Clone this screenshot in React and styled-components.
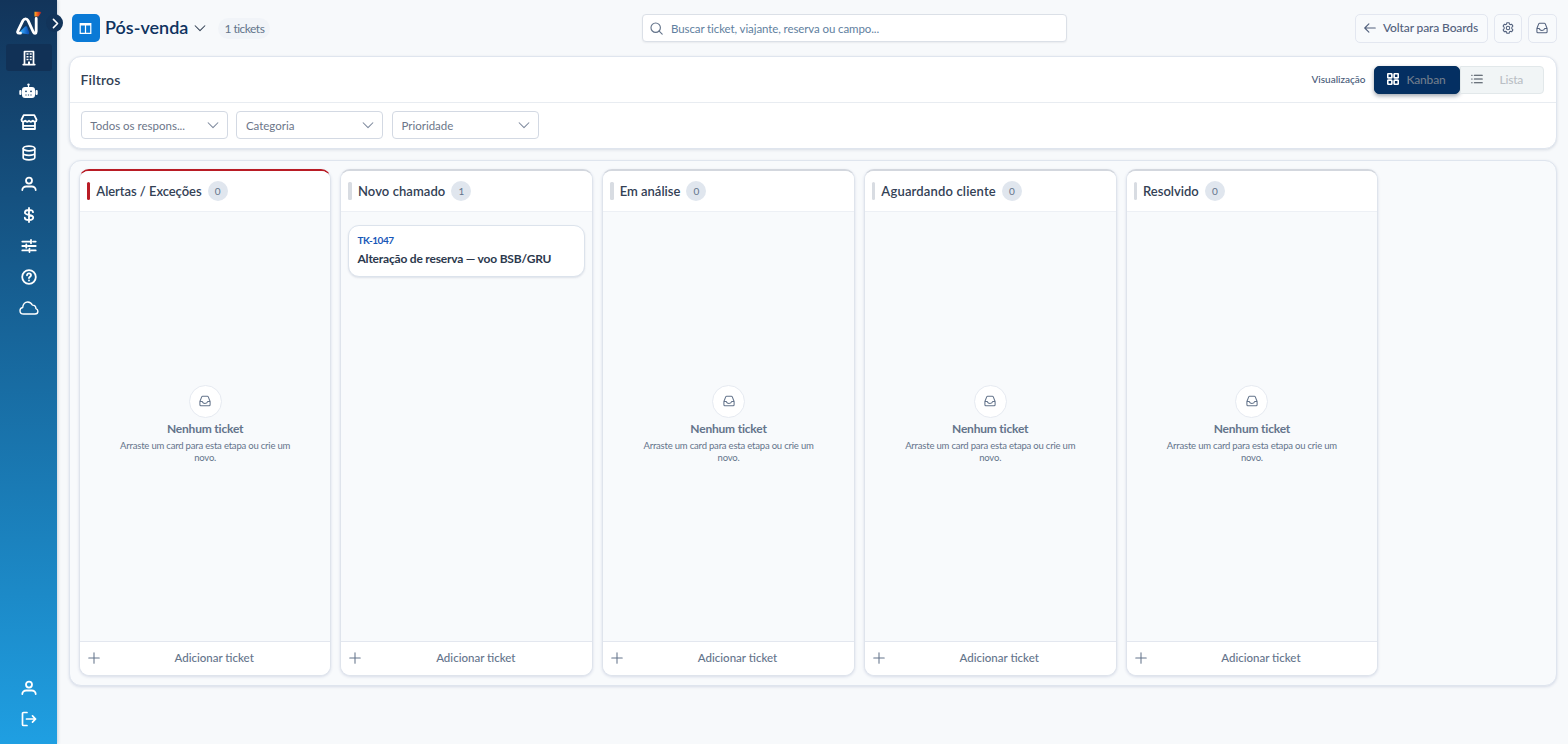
import React, { useState } from 'react';
import styled, { createGlobalStyle } from 'styled-components';

const GlobalStyle = createGlobalStyle`
  * {
    box-sizing: border-box;
  }

  body {
    margin: 0;
    background: #f7f9fb;
    font-family: 'Lato', 'Noto Sans', sans-serif;
    color: #334155;
    overflow: hidden;
  }

  button, input {
    font-family: inherit;
    margin: 0;
    padding: 0;
  }
`;

const Page = styled.div`
  display: flex;
  height: 744px;
`;

/* ---------- sidebar ---------- */

const Sidebar = styled.aside`
  position: relative;
  flex: none;
  width: 57px;
  height: 100%;
  display: flex;
  flex-direction: column;
  align-items: center;
  padding: 10px 0 10px;
  background: linear-gradient(180deg, #12345a 0%, #17659a 45%, #1f9fe2 100%);
  box-shadow: 1px 0 3px rgba(15, 40, 80, 0.18);
`;

const Logo = styled.div`
  height: 34px;
  width: 100%;
  padding-left: 15px;

  svg {
    display: block;
  }
`;

const NavItem = styled.button`
  width: 46px;
  height: ${(props) => (props.$active ? '27px' : '31px')};
  margin-bottom: ${(props) => (props.$active ? '4px' : '0')};
  display: flex;
  align-items: center;
  justify-content: center;
  border: 0;
  border-radius: 3px;
  color: #fff;
  background: ${(props) => (props.$active ? '#113156' : 'transparent')};
`;

const NavBottom = styled.div`
  margin-top: auto;
  display: flex;
  flex-direction: column;
`;

const Toggle = styled.button`
  position: absolute;
  top: 14px;
  left: 46px;
  width: 17px;
  height: 18px;
  display: flex;
  align-items: center;
  justify-content: center;
  padding-left: 2px;
  border: 0;
  border-radius: 50%;
  background: #12345a;
  color: #fff;
`;

/* ---------- top bar ---------- */

const Main = styled.main`
  flex: 1;
  min-width: 0;
  padding: 0 11.5px 0 11.5px;
`;

const TopBar = styled.header`
  height: 56px;
  display: grid;
  grid-template-columns: 573.5px 425px 1fr;
  align-items: center;
`;

const TitleGroup = styled.div`
  display: flex;
  align-items: center;
  padding-left: 3.5px;
`;

const BoardIcon = styled.span`
  width: 28px;
  height: 28px;
  display: flex;
  align-items: center;
  justify-content: center;
  margin-right: 5px;
  padding-right: 1px;
  border-radius: 5px;
  background: #0a7ad6;
  color: #fff;
`;

const Title = styled.h1`
  margin: 0 6px 2px 0;
  font-size: 18px;
  font-weight: 600;
  line-height: 22px;
  letter-spacing: 0;
  color: #0f335f;
`;

const Pill = styled.span`
  height: 21px;
  margin-left: 12px;
  padding: 0 6px;
  border-radius: 11px;
  background: #f1f4f8;
  color: #64748b;
  font-size: 12px;
  line-height: 21px;
  letter-spacing: -0.5px;
`;

const SearchBox = styled.label`
  height: 28px;
  display: flex;
  align-items: center;
  gap: 8px;
  padding: 0 7px;
  border: 1px solid #dbe0e7;
  border-radius: 4px;
  background: #fff;
  box-shadow: 0 1px 2px rgba(15, 23, 42, 0.06);
  color: #64748b;

  input {
    flex: 1;
    border: 0;
    outline: 0;
    background: transparent;
    font-size: 11.5px;
    letter-spacing: -0.1px;

    &::placeholder {
      color: #5f7fa0;
      opacity: 1;
    }
  }
`;

const Actions = styled.div`
  display: flex;
  justify-content: flex-end;
  gap: 6px;
`;

const GhostButton = styled.button`
  width: ${(props) => props.$width}px;
  height: 29px;
  display: flex;
  align-items: center;
  justify-content: center;
  gap: 7px;
  padding-bottom: 1px;
  border: 1px solid #e3e7f0;
  border-radius: 5px;
  background: #f8fafc;
  color: #52617d;
  font-size: 12px;
  font-weight: 500;
  letter-spacing: -0.12px;
`;

/* ---------- filters ---------- */

const FilterCard = styled.section`
  height: 93px;
  border: 1px solid #dfe5ee;
  border-radius: 12px;
  background: #fff;
  box-shadow: 0 1px 3px rgba(30, 50, 90, 0.14);
`;

const FilterHead = styled.div`
  height: 46px;
  display: flex;
  align-items: center;
  padding: 0 12px 0 11px;
  border-bottom: 1px solid #e8ecf1;

  h2 {
    margin: 0 auto 0 0;
    font-size: 14px;
    font-weight: 600;
    letter-spacing: 0.16px;
    color: #334155;
  }
`;

const ViewLabel = styled.span`
  margin: 0 8px 2px 0;
  font-size: 10px;
  font-weight: 500;
  color: #475a78;
`;

const ViewButton = styled.button`
  width: ${(props) => (props.$active ? '86px' : '84px')};
  height: 28px;
  display: flex;
  align-items: center;
  padding: 0 0 1px ${(props) => (props.$active ? '12px' : '10px')};
  border: 1px solid ${(props) => (props.$active ? '#05305f' : '#e2e8ea')};
  border-radius: ${(props) => (props.$active ? '5px' : '0 4px 4px 0')};
  background: ${(props) => (props.$active ? '#042f62' : '#f1f5f6')};
  box-shadow: ${(props) => (props.$active ? '0 2px 4px rgba(20, 35, 60, 0.4)' : 'none')};
  color: ${(props) => (props.$active ? '#707c8b' : '#babfc5')};
  font-size: 12px;
  font-weight: 500;
  letter-spacing: -0.2px;

  svg {
    flex: none;
    margin-right: ${(props) => (props.$active ? '8px' : '17px')};
    color: ${(props) => (props.$active ? '#fff' : '#3f4854')};
  }
`;

const FilterRow = styled.div`
  display: flex;
  gap: 8.6px;
  padding: 8px 11.4px;
`;

const Select = styled.button`
  width: 147px;
  height: 28px;
  display: flex;
  align-items: center;
  justify-content: space-between;
  padding: 0 8px 0 8.4px;
  border: 1px solid #d3d9e3;
  border-radius: 4px;
  background: #fff;
  color: #6c7689;
  font-size: 11.5px;

  svg {
    color: #7c889c;
  }
`;

/* ---------- board ---------- */

const Board = styled.section`
  height: 526px;
  margin-top: 11px;
  display: flex;
  gap: 9px;
  padding: 8px 9.3px;
  border: 1px solid #dfe5ee;
  border-radius: 12px;
  background: #f8fafc;
  box-shadow: 0 1px 3px rgba(50, 70, 130, 0.16);
`;

const Column = styled.article`
  flex: none;
  width: 252.7px;
  height: 507px;
  display: flex;
  flex-direction: column;
  border: 1px solid #dfe4ec;
  border-top: 2px solid ${(props) => (props.$alert ? '#b91c25' : '#d3d7de')};
  border-radius: 10px;
  background: #f8fafc;
  box-shadow: 0 1px 3px rgba(50, 70, 130, 0.16);
  overflow: hidden;
`;

const ColumnHead = styled.div`
  height: 41px;
  flex: none;
  display: flex;
  align-items: center;
  padding-left: 7px;
  background: #fff;
  border-bottom: 1px solid #edf0f5;

  &::before {
    content: '';
    width: 3.5px;
    height: 18px;
    margin-right: 6px;
    border-radius: 1.5px;
    background: ${(props) => (props.$alert ? '#b91c25' : '#d8dce2')};
  }

  h3 {
    margin: 0;
    font-size: 13px;
    font-weight: 600;
    color: #334155;
    letter-spacing: ${(props) => props.$spacing}px;
  }
`;

const Count = styled.span`
  width: 20px;
  height: 20px;
  margin-left: 6px;
  border-radius: 50%;
  background: #e0e6ee;
  color: #64748b;
  font-size: 10px;
  line-height: 20px;
  text-align: center;
`;

const ColumnBody = styled.div`
  flex: 1;
  padding: 13px 7px;
`;

const EmptyState = styled.div`
  height: 100%;
  display: flex;
  flex-direction: column;
  align-items: center;
  justify-content: center;
  padding-bottom: 5px;
  text-align: center;
  color: #64748b;

  strong {
    margin-top: 3px;
    font-size: 12px;
    font-weight: 700;
    line-height: 15px;
    letter-spacing: -0.2px;
  }

  p {
    width: 180px;
    margin: 4px 0 0;
    font-size: 9.5px;
    line-height: 12px;
    letter-spacing: -0.2px;
  }
`;

const EmptyIcon = styled.span`
  width: 33px;
  height: 33px;
  display: flex;
  align-items: center;
  justify-content: center;
  border: 1px solid #e6eaf1;
  border-radius: 50%;
  background: #fff;
`;

const TicketCard = styled.div`
  height: 52px;
  padding: 8px 8px;
  border: 1px solid #dce3ec;
  border-radius: 11px;
  background: #fff;
  box-shadow: 0 1px 2px rgba(30, 50, 90, 0.12);

  small {
    display: block;
    font-size: 10px;
    line-height: 12px;
    font-weight: 700;
    letter-spacing: -0.5px;
    color: #1857b8;
  }

  strong {
    display: block;
    margin-top: 5px;
    font-size: 12px;
    line-height: 15px;
    font-weight: 700;
    letter-spacing: -0.2px;
    white-space: nowrap;
    color: #2c394d;
  }
`;

const AddButton = styled.button`
  flex: none;
  height: 34px;
  display: flex;
  align-items: center;
  padding: 0 8px 2px;
  border: 0;
  border-top: 1px solid #e3e7ef;
  background: #fff;
  color: #64748b;
  font-size: 11.5px;
  font-weight: 500;

  span {
    flex: 1;
    text-align: center;
    padding-left: 6px;
  }
`;

/* ---------- icons ---------- */

const Icon = ({ size = 16, stroke = 1.5, children }) => (
  <svg width={size} height={size} viewBox="0 0 16 16" fill="none" stroke="currentColor"
    strokeWidth={stroke} strokeLinecap="round" strokeLinejoin="round">
    {children}
  </svg>
);

const LogoMark = () => (
  <svg width="27" height="28" viewBox="0 0 27 28" fill="none" strokeLinecap="round" strokeLinejoin="round">
    <defs>
      <linearGradient id="flag" x1="0" x2="1">
        <stop offset="0" stopColor="#ffb320" />
        <stop offset="0.45" stopColor="#f25a22" />
        <stop offset="1" stopColor="#8c2434" />
      </linearGradient>
      <linearGradient id="wing" x1="0" x2="1">
        <stop offset="0" stopColor="#35a5f5" />
        <stop offset="1" stopColor="#0c55bd" />
      </linearGradient>
    </defs>
    <path d="M6.500 22 11 17.500 13 23Z" fill="url(#wing)" stroke="url(#wing)" strokeWidth="2.500" />
    <path d="M5.500 23.200H4.200C2.400 23.200 2.300 22 2.900 20.900L7.900 10.700C9.200 8.300 11.900 8.200 13.100 10.700L18.300 22C19.300 24.100 21.200 23.800 21.200 21.500V8.500"
      stroke="#fff" strokeWidth="2.800" />
    <path d="M19.500 1.800h5.700c1 0 1.300.8.700 1.500L23.500 6.600h-4Z" fill="url(#flag)" />
  </svg>
);

const Building = () => (
  <Icon size={16} stroke={1.5}>
    <path d="M3.500 14.500v-13h9v13M2.200 14.600h11.600" strokeWidth="1.700" />
    <path d="M5.500 4h2M8.700 4h2M5.500 6.700h2M8.700 6.700h2M5.500 9.400h2M8.700 9.400h2" strokeLinecap="butt" strokeWidth="1.500" />
    <path d="M8 14.500v-3" strokeLinecap="butt" strokeWidth="2" />
  </Icon>
);

const Robot = () => (
  <svg width="19" height="16" viewBox="0 0 19 16" fill="currentColor">
    <circle cx="9.500" cy="1.600" r="1.200" />
    <path d="M8.900 2h1.200v3H8.900z" />
    <rect x="3" y="4" width="13" height="11" rx="3" />
    <rect x="0.300" y="7" width="2.200" height="5" rx="1" />
    <rect x="16.500" y="7" width="2.200" height="5" rx="1" />
    <circle cx="7" cy="8.300" r="0.900" fill="#144068" />
    <circle cx="12" cy="8.300" r="0.900" fill="#144068" />
    <path d="M6.400 11.500h1.200v.9H6.400zM8.900 11.500h1.200v.9H8.900zM11.400 11.500h1.200v.9h-1.200z" fill="#144068" />
  </svg>
);

const Store = () => (
  <Icon size={18} stroke={1.6}>
    <path d="M3.300 1.800h9.400l2 4.200c0 2-2.100 2.200-3.300.8-1 1.300-2.600 1.300-3.400 0-.8 1.300-2.400 1.300-3.400 0C3.400 8.200 1.300 8 1.300 6Z" />
    <path d="M2.700 8.500v5.700h10.600V8.500M3 11.400h10" />
  </Icon>
);

const Database = () => (
  <Icon size={16} stroke={1.7}>
    <ellipse cx="8" cy="3.500" rx="5.800" ry="2.300" />
    <path d="M2.200 3.500v9c0 1.300 2.600 2.300 5.800 2.300s5.800-1 5.800-2.300v-9M2.200 8c0 1.300 2.600 2.300 5.800 2.300s5.800-1 5.800-2.300" />
  </Icon>
);

const User = () => (
  <Icon size={16} stroke={1.8}>
    <circle cx="8" cy="4.600" r="3" />
    <path d="M1.300 14c0-2.100 1.800-3.500 3.900-3.500h5.600c2.100 0 3.900 1.400 3.900 3.500" />
  </Icon>
);

const Dollar = () => (
  <Icon size={16} stroke={1.8}>
    <path d="M8 1v14M12 5.200C12 3.700 10.600 3 8 3S3.900 3.900 3.900 5.500c0 3.500 8.300 1.500 8.300 5C12.200 12.200 10.600 13 8 13s-4.200-.8-4.200-2.300" />
  </Icon>
);

const Sliders = () => (
  <Icon size={16} stroke={1.8}>
    <path d="M1.300 3.600h8.200M12 3.600h2.700M1.300 8h3.200M7 8h7.700M1.300 12.400h6.200M10.300 12.400h4.400M10 1.900v3.400M5.300 6.300v3.400M8.500 10.700v3.400" />
  </Icon>
);

const Help = () => (
  <Icon size={16} stroke={1.8}>
    <circle cx="8" cy="8" r="6.800" />
    <path d="M6 6.300C6 5 6.900 4.400 8 4.400s2 .7 2 1.800c0 1.500-2 1.500-2 2.900M8 11.500v.1" />
  </Icon>
);

const Cloud = () => (
  <svg width="20" height="16" viewBox="0 0 20 16" fill="none" stroke="currentColor" strokeWidth="1.400" strokeLinejoin="round">
    <path d="M4.700 14C2.500 14 1 12.600 1 10.700c0-1.600 1.100-2.900 2.700-3.200C3.900 4.300 6 2 8.700 2c2.200 0 3.800 1.200 4.600 3.100 2.200-.2 3.800 1.300 3.600 3.500 1.300.4 2 1.400 2 2.600 0 1.700-1.200 2.800-2.900 2.800Z" />
  </svg>
);

const Logout = () => (
  <Icon size={16} stroke={1.7}>
    <path d="M6 1.500H2.600c-.7 0-1.100.4-1.100 1.100v10.800c0 .7.400 1.100 1.100 1.100H6M5.500 8h9M11.500 4.900 14.600 8l-3.100 3.100" />
  </Icon>
);

const Chevron = () => (
  <Icon size={12} stroke={1.4}><path d="M1.500 5 8 11.500 14.500 5" /></Icon>
);

const Inbox = () => (
  <Icon size={12} stroke={1.4}>
    <path d="M1.200 8.600v4.500c0 .8.500 1.300 1.300 1.300h11c.8 0 1.300-.5 1.300-1.300V8.600M1.200 8.600 3.600 2.500c.3-.6.700-.9 1.300-.9h6.200c.6 0 1 .3 1.300.9l2.400 6.100M1.200 8.600h3.300c.2 1.600 1.300 2.600 3.500 2.600s3.300-1 3.500-2.600h3.300" />
  </Icon>
);

const Gear = () => (
  <Icon size={12} stroke={1.4}>
    <path d="m6.500 1h3l.5 1.900 1.100.6 1.900-.6 1.500 2.600L13.100 7v2l1.400 1.500-1.500 2.600-1.900-.6-1.100.6-.5 1.900h-3L6 13.100l-1.100-.6-1.900.6-1.500-2.600L2.900 9V7L1.500 5.500 3 2.900l1.900.6L6 2.900Z" />
    <circle cx="8" cy="8" r="2.300" />
  </Icon>
);

const navItems = [Building, Robot, Store, Database, User, Dollar, Sliders, Help, Cloud];

const columns = [
  { id: 'alerts', name: 'Alertas / Exceções', alert: true, spacing: -0.05, tickets: [] },
  {
    id: 'new',
    name: 'Novo chamado',
    spacing: 0.08,
    tickets: [{ code: 'TK-1047', title: 'Alteração de reserva — voo BSB/GRU' }],
  },
  { id: 'analysis', name: 'Em análise', spacing: 0, tickets: [] },
  { id: 'waiting', name: 'Aguardando cliente', spacing: 0.16, tickets: [] },
  { id: 'done', name: 'Resolvido', spacing: 0, tickets: [] },
];

const BoardColumn = ({ column }) => (
  <Column $alert={column.alert}>
    <ColumnHead $alert={column.alert} $spacing={column.spacing}>
      <h3>{column.name}</h3>
      <Count>{column.tickets.length}</Count>
    </ColumnHead>
    <ColumnBody>
      {column.tickets.length > 0 ? column.tickets.map((ticket) => (
        <TicketCard key={ticket.code}>
          <small>{ticket.code}</small>
          <strong>{ticket.title}</strong>
        </TicketCard>
      )) : (
        <EmptyState>
          <EmptyIcon><Inbox /></EmptyIcon>
          <strong>Nenhum ticket</strong>
          <p>Arraste um card para esta etapa ou crie um novo.</p>
        </EmptyState>
      )}
    </ColumnBody>
    <AddButton>
      <Icon size={12} stroke={1.4}><path d="M8 1v14M1 8h14" /></Icon>
      <span>Adicionar ticket</span>
    </AddButton>
  </Column>
);

const App = () => {
  const [view, setView] = useState('kanban');
  const [search, setSearch] = useState('');

  return (
    <Page>
      <GlobalStyle />
      <Sidebar>
        <Logo><LogoMark /></Logo>
        {navItems.map((NavIcon, i) => (
          <NavItem key={i} $active={i === 0}><NavIcon /></NavItem>
        ))}
        <NavBottom>
          <NavItem><User /></NavItem>
          <NavItem><Logout /></NavItem>
        </NavBottom>
        <Toggle><Icon size={11} stroke={2.3}><path d="m5 2 6 6-6 6" /></Icon></Toggle>
      </Sidebar>

      <Main>
        <TopBar>
          <TitleGroup>
            <BoardIcon>
              <Icon size={13} stroke={1.5}><path d="M1.500 2h13v12h-13zM8 2v12M1.500 3.500h13" strokeLinejoin="miter" /></Icon>
            </BoardIcon>
            <Title>Pós-venda</Title>
            <Chevron />
            <Pill>1 tickets</Pill>
          </TitleGroup>
          <SearchBox>
            <Icon size={13} stroke={1.4}><circle cx="7" cy="7" r="5.800" /><path d="m11.300 11.300 3.700 3.700" /></Icon>
            <input
              value={search}
              onChange={(e) => setSearch(e.target.value)}
              placeholder="Buscar ticket, viajante, reserva ou campo..."
            />
          </SearchBox>
          <Actions>
            <GhostButton $width={133}>
              <Icon size={12} stroke={1.5}><path d="M15 8H1M6.500 2.500 1 8l5.500 5.500" /></Icon>
              Voltar para Boards
            </GhostButton>
            <GhostButton $width={28}><Gear /></GhostButton>
            <GhostButton $width={29}><Inbox /></GhostButton>
          </Actions>
        </TopBar>

        <FilterCard>
          <FilterHead>
            <h2>Filtros</h2>
            <ViewLabel>Visualização</ViewLabel>
            <ViewButton $active={view === 'kanban'} onClick={() => setView('kanban')}>
              <Icon size={12} stroke={2.2}>
                <rect x="1" y="1" width="5.500" height="5.500" rx="1" />
                <rect x="9.500" y="1" width="5.500" height="5.500" rx="1" />
                <rect x="1" y="9.500" width="5.500" height="5.500" rx="1" />
                <rect x="9.500" y="9.500" width="5.500" height="5.500" rx="1" />
              </Icon>
              Kanban
            </ViewButton>
            <ViewButton $active={view === 'lista'} onClick={() => setView('lista')}>
              <Icon size={12} stroke={1.6}><path d="M4.500 3H15M4.500 8H15M4.500 13H15M1 3h.4M1 8h.4M1 13h.4" /></Icon>
              Lista
            </ViewButton>
          </FilterHead>
          <FilterRow>
            <Select>Todos os respons...<Chevron /></Select>
            <Select>Categoria<Chevron /></Select>
            <Select>Prioridade<Chevron /></Select>
          </FilterRow>
        </FilterCard>

        <Board>
          {columns.map((column) => <BoardColumn key={column.id} column={column} />)}
        </Board>
      </Main>
    </Page>
  );
};

export default App;
